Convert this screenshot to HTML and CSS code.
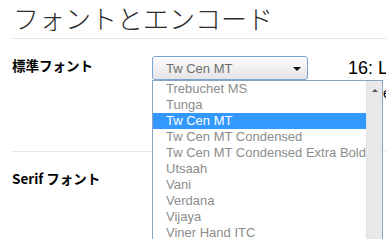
FILE: index.html
```html
<!DOCTYPE html>
<html lang="ja">
<head>
<meta charset="utf-8">
<link rel="stylesheet" href="styles.css">
</head>
<body>
<div class="page">
  <h1 class="title">フォントとエンコード</h1>
  <section class="sec sec-first">
    <div class="row">
      <div class="label">標準フォント</div>
      <div class="select-wrap">
        <div class="select">
          <span class="select-text">Tw Cen MT</span>
          <span class="arrow"></span>
        </div>
        <div class="dropdown">
          <ul class="items">
            <li>Trebuchet MS</li>
            <li>Tunga</li>
            <li class="on">Tw Cen MT</li>
            <li>Tw Cen MT Condensed</li>
            <li>Tw Cen MT Condensed Extra Bold</li>
            <li>Utsaah</li>
            <li>Vani</li>
            <li>Verdana</li>
            <li>Vijaya</li>
            <li>Viner Hand ITC</li>
          </ul>
          <div class="scrollbar"><span class="up"></span></div>
        </div>
      </div>
      <div class="sample">
        <div class="sample-main">16: Lorem</div>
        <div class="peek peek-a">e</div>
      </div>
    </div>
  </section>
  <section class="sec">
    <div class="row">
      <div class="label">Serif フォント</div>
      <div class="spacer"></div>
      <div class="sample">
        <div class="peek peek-b">-</div>
        <div class="peek peek-c">e</div>
      </div>
    </div>
  </section>
</div>
</body>
</html>
```
FILE: styles.css
```css
html, body {
  margin: 0;
  padding: 0;
  background: #ffffff;
  overflow: hidden;
}
body {
  width: 386px;
  height: 239px;
  font-family: "Liberation Sans", Arial, "Noto Sans CJK JP", sans-serif;
  color: #000;
}
.page {
  padding-left: 12px;
}
.title {
  margin: 0;
  padding: 0 0 2px 1px;
  height: 36px;
  line-height: 36px;
  font-family: "Noto Sans CJK JP", sans-serif;
  font-weight: 300;
  font-size: 26px;
  color: #2e2e2e;
  border-bottom: 1px solid #e6e6e6;
  white-space: nowrap;
}
.sec {
  padding-top: 17px;
  box-sizing: border-box;
}
.sec-first {
  height: 113px;
  border-bottom: 1px solid #e6e6e6;
}
.row {
  display: flex;
  align-items: flex-start;
}
.label {
  width: 140px;
  flex: none;
  font-family: "Noto Sans CJK JP", sans-serif;
  font-weight: 700;
  font-size: 13.5px;
  line-height: 18px;
  white-space: nowrap;
}
.spacer {
  width: 196px;
  flex: none;
}
.select-wrap {
  position: relative;
  width: 156px;
  flex: none;
}
.select {
  box-sizing: border-box;
  height: 24px;
  border: 1px solid #7aa3d6;
  border-radius: 3px;
  background: linear-gradient(#fdfdfd, #e4e4e4);
  display: flex;
  align-items: center;
  justify-content: space-between;
  padding: 0 6px 0 13px;
}
.select-text {
  font-size: 13px;
  color: #6e6e6e;
}
.arrow {
  width: 0;
  height: 0;
  border-left: 4px solid transparent;
  border-right: 4px solid transparent;
  border-top: 4px solid #111;
  margin-top: 1px;
}
.dropdown {
  position: absolute;
  top: 24px;
  left: 0;
  width: 231px;
  height: 170px;
  box-sizing: border-box;
  border: 1px solid #89a4c2;
  background: #fff;
  display: flex;
  overflow: hidden;
  z-index: 2;
}
.items {
  list-style: none;
  margin: 0;
  padding: 0;
  flex: 1;
}
.items li {
  height: 16px;
  line-height: 16px;
  padding-left: 13px;
  font-size: 13px;
  color: #8c8c8c;
  white-space: nowrap;
  overflow: hidden;
}
.items li.on {
  background: #3399ff;
  color: #ffffff;
}
.scrollbar {
  width: 16px;
  flex: none;
  background: #e9e9e9;
  border-left: 1px solid #e0e0e0;
  display: flex;
  justify-content: center;
  padding-top: 8px;
  box-sizing: border-box;
}
.up {
  width: 0;
  height: 0;
  border-left: 3px solid transparent;
  border-right: 3px solid transparent;
  border-bottom: 3px solid #555;
}
.sample {
  margin-left: 40px;
  white-space: nowrap;
}
.sample-main {
  font-size: 18px;
  line-height: 22px;
  margin-top: 1px;
}
.peek {
  margin-left: 35px;
  font-size: 14px;
  line-height: 14px;
}
.peek-a {
  margin-top: 7px;
}
.peek-b {
  margin-top: 10px;
}
.peek-c {
  margin-top: 4px;
}
```
